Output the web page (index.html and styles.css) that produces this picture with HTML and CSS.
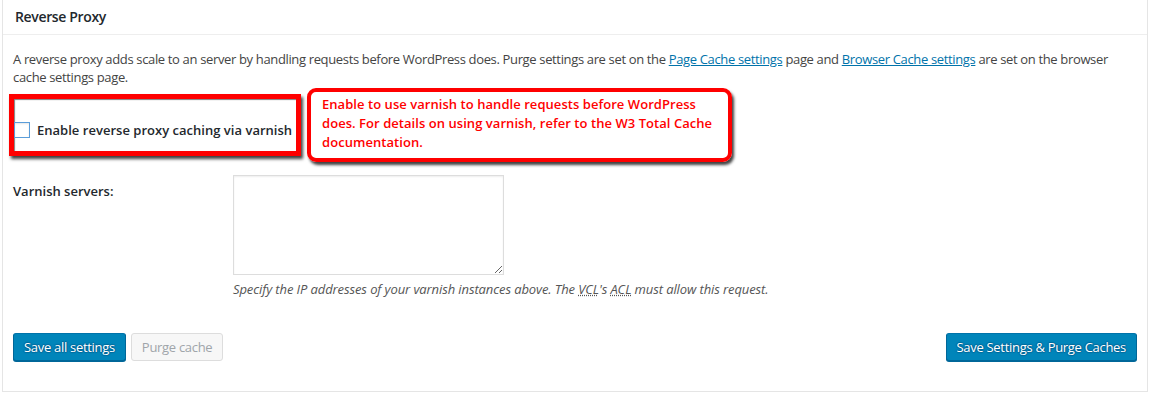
FILE: index.html
```html
<!DOCTYPE html>
<html>
<head>
<meta charset="utf-8">
<link rel="stylesheet" href="styles.css">
</head>
<body>
<div class="panel">
  <div class="panel-header">Reverse Proxy</div>
  <div class="panel-body">
    <p class="intro">A reverse proxy adds scale to an server by handling requests before WordPress does. Purge settings are set on the <a href="#">Page Cache settings</a> page and <a href="#">Browser Cache settings</a> are set on the browser cache settings page.</p>
    <div class="annot-row">
      <div class="annot-check">
        <label class="check-label"><span class="checkbox"></span>Enable reverse proxy caching via varnish</label>
      </div>
      <div class="annot-note">Enable to use varnish to handle requests before WordPress does. For details on using varnish, refer to the W3 Total Cache documentation.</div>
    </div>
    <div class="field-row">
      <div class="field-label">Varnish servers:</div>
      <div class="field-control">
        <textarea class="servers"></textarea>
        <p class="description">Specify the IP addresses of your varnish instances above. The <abbr>VCL</abbr>'s <abbr>ACL</abbr> must allow this request.</p>
      </div>
    </div>
    <div class="actions">
      <div class="actions-left">
        <button class="btn btn-primary">Save all settings</button>
        <button class="btn btn-disabled">Purge cache</button>
      </div>
      <button class="btn btn-primary">Save Settings &amp; Purge Caches</button>
    </div>
  </div>
</div>
</body>
</html>
```

FILE: styles.css
```css
html, body {
  margin: 0;
  padding: 0;
  background: #fff;
}
body {
  font-family: "Open Sans", "Noto Sans", sans-serif;
  font-size: 13px;
  color: #444;
  letter-spacing: -0.35px;
}
.panel {
  margin: 0 2px 0 2px;
  border: 1px solid #e5e5e5;
  border-top: none;
  height: 392px;
  box-sizing: border-box;
}
.panel-header {
  height: 35px;
  box-sizing: border-box;
  padding: 7px 12px 0 12px;
  font-size: 14px;
  font-weight: 600;
  color: #23282d;
  border-bottom: 1px solid #eee;
  line-height: 20px;
}
.panel-body {
  padding: 14px 10px 0 10px;
}
.intro {
  margin: 0;
  line-height: 18px;
  padding-top: 1px;
}
.intro a {
  color: #0073aa;
  text-decoration: underline;
}
.annot-row {
  display: flex;
  align-items: center;
  gap: 6px;
  margin: 2px 0 0 -4px;
}
.annot-check {
  width: 292px;
  height: 62px;
  box-sizing: border-box;
  border: 5px solid #f00;
  box-shadow: 2px 3px 3px rgba(0,0,0,0.75), inset 1px 1px 1px rgba(0,0,0,0.5);
  padding: 23px 0 0 0;
}
.check-label {
  display: flex;
  align-items: center;
  gap: 7px;
  font-weight: 600;
  color: #23282d;
  line-height: 16px;
  letter-spacing: 0.02px;
}
.checkbox {
  width: 16px;
  height: 16px;
  box-sizing: border-box;
  border: 1px solid #5b9dd9;
  background: #fff;
  box-shadow: inset 0 1px 2px rgba(0,0,0,0.1);
}
.annot-note {
  width: 425px;
  height: 74px;
  box-sizing: border-box;
  border: 4px solid #f00;
  border-radius: 9px;
  box-shadow: 2px 3px 3px rgba(0,0,0,0.75);
  padding: 3px 10px 0 11px;
  color: #f00;
  font-weight: 600;
  line-height: 19px;
  letter-spacing: 0.05px;
}
.field-row {
  display: flex;
  margin-top: 13px;
}
.field-label {
  width: 220px;
  flex: none;
  padding-top: 7px;
  font-weight: 600;
  color: #23282d;
  line-height: 18px;
  letter-spacing: 0;
}
.servers {
  display: block;
  width: 271px;
  height: 100px;
  box-sizing: border-box;
  margin: 0;
  border: 1px solid #ddd;
  box-shadow: inset 0 1px 2px rgba(0,0,0,0.07);
  resize: vertical;
}
.description {
  margin: 5px 0 0 0;
  font-style: italic;
  color: #555;
  line-height: 18px;
  letter-spacing: -0.1px;
}
abbr {
  text-decoration: underline dotted;
}
.actions {
  display: flex;
  justify-content: space-between;
  margin-top: 35px;
}
.actions-left {
  display: flex;
  gap: 5px;
}
.btn {
  height: 28px;
  box-sizing: border-box;
  padding: 0 10px 1px;
  font-family: inherit;
  font-size: 13px;
  letter-spacing: -0.3px;
  line-height: 26px;
  border-radius: 3px;
  border: 1px solid;
  cursor: pointer;
}
.btn-primary {
  background: #0085ba;
  border-color: #0073aa #006799 #006799;
  box-shadow: 0 1px 0 #006799;
  color: #fff;
  text-shadow: 0 -1px 1px #006799, 1px 0 1px #006799, 0 1px 1px #006799, -1px 0 1px #006799;
}
.btn-disabled {
  background: #f7f7f7;
  border-color: #ddd;
  color: #a0a5aa;
  box-shadow: none;
}
```
